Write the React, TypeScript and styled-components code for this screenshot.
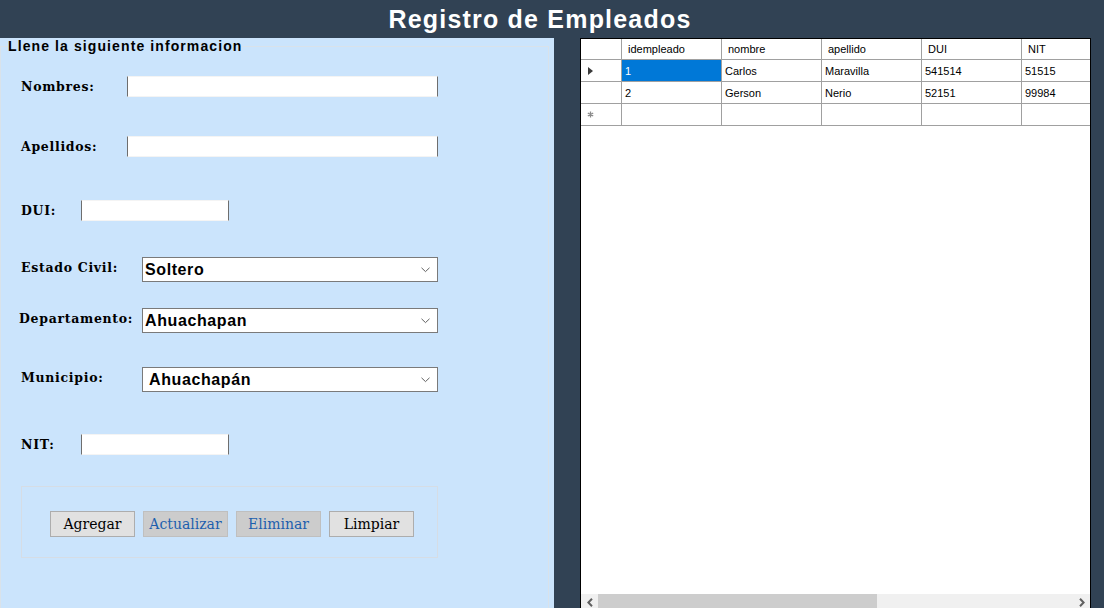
import styled, { createGlobalStyle } from "styled-components";

const GlobalStyle = createGlobalStyle`
  html, body { margin: 0; padding: 0; }
  body { background: #314254; overflow: hidden; }
`;

const columns = ["idempleado", "nombre", "apellido", "DUI", "NIT"];
const empleados = [
    ["1", "Carlos", "Maravilla", "541514", "51515"],
    ["2", "Gerson", "Nerio", "52151", "99984"],
];

function Chevron() {
    return (
        <svg width="9" height="6" viewBox="0 0 9 6">
            <path d="M0.5 0.8 L4.5 4.6 L8.5 0.8" fill="none" stroke="#606060" strokeWidth="1" />
        </svg>
    );
}

function ComboBox({ value, $pad }: { value: string; $pad?: number }) {
    return (
        <Combo $pad={$pad}>
            <span>{value}</span>
            <Chevron />
        </Combo>
    );
}

function App() {
    return (
        <>
            <GlobalStyle />
            <Page>
                <Header>Registro de Empleados</Header>
                <Body>
                    <LeftPanel>
                        <GroupBox>
                            <Legend>Llene la siguiente informacion</Legend>

                            <FormRow $top={21}>
                                <Label $width={106}>Nombres:</Label>
                                <TextBox $width={311} />
                            </FormRow>
                            <FormRow $top={39}>
                                <Label $width={106}>Apellidos:</Label>
                                <TextBox $width={311} />
                            </FormRow>
                            <FormRow $top={43}>
                                <Label $width={60}>DUI:</Label>
                                <TextBox $width={148} />
                            </FormRow>
                            <FormRow $top={36}>
                                <Label $width={121} $raise={4}>Estado Civil:</Label>
                                <ComboBox value="Soltero" />
                            </FormRow>
                            <FormRow $top={26} $indent={18}>
                                <Label $width={123} $raise={5}>Departamento:</Label>
                                <ComboBox value="Ahuachapan" />
                            </FormRow>
                            <FormRow $top={34}>
                                <Label $width={121} $raise={4}>Municipio:</Label>
                                <ComboBox value="Ahuachapán" $pad={6} />
                            </FormRow>
                            <FormRow $top={42}>
                                <Label $width={60}>NIT:</Label>
                                <TextBox $width={148} />
                            </FormRow>

                            <ButtonPanel>
                                <ActionButton>Agregar</ActionButton>
                                <ActionButton disabled>Actualizar</ActionButton>
                                <ActionButton disabled>Eliminar</ActionButton>
                                <ActionButton>Limpiar</ActionButton>
                            </ButtonPanel>
                        </GroupBox>
                    </LeftPanel>

                    <DataGrid>
                        <GridRows>
                            <GridRow $height={21}>
                                <RowHeader />
                                {columns.map(c => (
                                    <HeaderCell key={c}>{c}</HeaderCell>
                                ))}
                            </GridRow>
                            {empleados.map((row, i) => (
                                <GridRow key={row[0]}>
                                    <RowHeader>{i === 0 && <CurrentArrow />}</RowHeader>
                                    {row.map((v, j) => (
                                        <Cell key={j} $selected={i === 0 && j === 0}>{v}</Cell>
                                    ))}
                                </GridRow>
                            ))}
                            <GridRow>
                                <RowHeader>
                                    <svg width="7" height="7" viewBox="0 0 7 7">
                                        <path d="M3.5 0.5 V6.5 M0.8 2 L6.2 5 M0.8 5 L6.2 2" stroke="#8a8a8a" strokeWidth="1.3" />
                                    </svg>
                                </RowHeader>
                                {columns.map(c => (
                                    <Cell key={c} />
                                ))}
                            </GridRow>
                        </GridRows>

                        <ScrollBar>
                            <ScrollArrow>
                                <svg width="6" height="9" viewBox="0 0 6 9">
                                    <path d="M5 0.8 L1.4 4.5 L5 8.2" fill="none" stroke="#606060" strokeWidth="2" />
                                </svg>
                            </ScrollArrow>
                            <ScrollTrack>
                                <ScrollThumb />
                            </ScrollTrack>
                            <ScrollArrow>
                                <svg width="6" height="9" viewBox="0 0 6 9">
                                    <path d="M1 0.8 L4.6 4.5 L1 8.2" fill="none" stroke="#606060" strokeWidth="2" />
                                </svg>
                            </ScrollArrow>
                        </ScrollBar>
                    </DataGrid>
                </Body>
            </Page>
        </>
    );
}

export default App;

const Page = styled.div`
  width: 1104px;
  height: 608px;
  overflow: hidden;
  display: flex;
  flex-direction: column;
  background: #314254;
`;
const Header = styled.h1`
  margin: 0;
  height: 38px;
  padding-right: 24px;
  display: flex;
  align-items: center;
  justify-content: center;
  color: #ffffff;
  font-family: "Liberation Sans", Arial, sans-serif;
  font-size: 25px;
  font-weight: 700;
  letter-spacing: 1.2px;
`;
const Body = styled.div`
  flex: 1;
  display: flex;
  gap: 26px;
  min-height: 0;
`;
const LeftPanel = styled.div`
  width: 554px;
  flex-shrink: 0;
  background: #cbe4fc;
`;
const GroupBox = styled.fieldset`
  margin: 0;
  padding: 0 0 0 20px;
  width: 527px;
  height: 600px;
  border: 1px solid #d9e2ea;
  border-bottom: none;
  display: flex;
  flex-direction: column;
`;
const Legend = styled.legend`
  margin-left: -13px;
  padding: 0;
  color: #000000;
  font-family: "Liberation Sans", Arial, sans-serif;
  font-size: 14px;
  font-weight: 700;
  letter-spacing: 1.1px;
  line-height: 17px;
`;
const FormRow = styled.div<{ $top: number; $indent?: number }>`
  display: flex;
  align-items: center;
  margin-top: ${p => p.$top}px;
  margin-left: ${p => (p.$indent ?? 20) - 20}px;
`;
const Label = styled.span<{ $width: number; $raise?: number }>`
  width: ${p => p.$width}px;
  flex-shrink: 0;
  margin-bottom: ${p => p.$raise ?? 0}px;
  color: #000000;
  font-family: "DejaVu Serif", "Liberation Serif", serif;
  font-size: 12.5px;
  font-weight: 700;
  letter-spacing: 0.7px;
`;
const TextBox = styled.div<{ $width: number }>`
  width: ${p => p.$width}px;
  height: 21px;
  box-sizing: border-box;
  background: #ffffff;
  border-left: 1px solid #6e6e6e;
  border-right: 1px solid #6e6e6e;
  border-top: 1px solid #f4f4f4;
  border-bottom: 1px solid #f4f4f4;
`;
const Combo = styled.div<{ $pad?: number }>`
  width: 296px;
  height: 25px;
  box-sizing: border-box;
  display: flex;
  align-items: center;
  justify-content: space-between;
  padding: 0 7px 0 ${p => p.$pad ?? 2}px;
  background: #ffffff;
  border: 1px solid #7a7a7a;
  font-family: "Liberation Sans", Arial, sans-serif;
  font-size: 16px;
  font-weight: 700;
  letter-spacing: 0.6px;
  color: #000000;
`;
const ButtonPanel = styled.div`
  width: 417px;
  height: 72px;
  box-sizing: border-box;
  margin-top: 31px;
  padding: 24px 0 0 28px;
  display: flex;
  gap: 8px;
  border: 1px solid #d6dde5;
`;
const ActionButton = styled.button`
  width: 85px;
  height: 26px;
  box-sizing: border-box;
  padding: 0;
  background: #e1e1e1;
  border: 1px solid #adadad;
  color: #000000;
  font-family: "DejaVu Serif", "Liberation Serif", serif;
  font-size: 14px;
  &:disabled {
    background: #cccccc;
    border-color: #bfbfbf;
    color: #1d5fae;
  }
`;
const DataGrid = styled.div`
  width: 509px;
  height: 572px;
  flex-shrink: 0;
  display: flex;
  flex-direction: column;
  justify-content: space-between;
  overflow: hidden;
  background: #ffffff;
  border: 1px solid #000000;
  border-bottom: none;
`;
const GridRows = styled.div`
  display: flex;
  flex-direction: column;
`;
const GridRow = styled.div<{ $height?: number }>`
  display: grid;
  grid-template-columns: 41px repeat(5, 100px);
  height: ${p => p.$height ?? 22}px;
`;
const RowHeader = styled.div`
  box-sizing: border-box;
  display: flex;
  align-items: center;
  justify-content: center;
  border-right: 1px solid #a0a0a0;
  border-bottom: 1px solid #a0a0a0;
  background: #ffffff;
  padding-right: 21px;
`;
const CurrentArrow = styled.span`
  width: 0;
  height: 0;
  border-top: 4.5px solid transparent;
  border-bottom: 4.5px solid transparent;
  border-left: 5px solid #3a3a3a;
`;
const HeaderCell = styled.div`
  box-sizing: border-box;
  display: flex;
  align-items: center;
  padding-left: 6px;
  border-right: 1px solid #a0a0a0;
  border-bottom: 1px solid #a0a0a0;
  font-family: "Liberation Sans", Arial, sans-serif;
  font-size: 11px;
  color: #000000;
`;
const Cell = styled.div<{ $selected?: boolean }>`
  box-sizing: border-box;
  display: flex;
  align-items: center;
  padding-left: 3px;
  border-right: 1px solid #a0a0a0;
  border-bottom: 1px solid #a0a0a0;
  background: ${p => (p.$selected ? "#0078d7" : "#ffffff")};
  color: ${p => (p.$selected ? "#ffffff" : "#000000")};
  font-family: "Liberation Sans", Arial, sans-serif;
  font-size: 11px;
`;
const ScrollBar = styled.div`
  height: 17px;
  flex-shrink: 0;
  display: flex;
  background: #f0f0f0;
`;
const ScrollArrow = styled.div`
  width: 17px;
  flex-shrink: 0;
  display: flex;
  align-items: center;
  justify-content: center;
`;
const ScrollTrack = styled.div`
  flex: 1;
  display: flex;
`;
const ScrollThumb = styled.div`
  width: 279px;
  background: #cdcdcd;
`;
